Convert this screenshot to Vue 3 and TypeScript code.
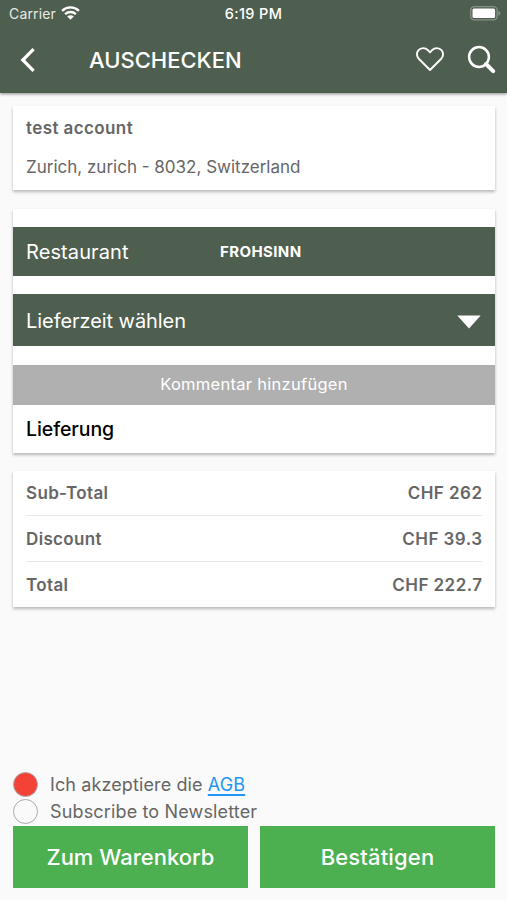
<script setup lang="ts">
import { ref } from 'vue'

interface TotalRow {
  label: string
  amount: string
}

const totals: TotalRow[] = [
  { label: 'Sub-Total', amount: 'CHF 262' },
  { label: 'Discount', amount: 'CHF 39.3' },
  { label: 'Total', amount: 'CHF 222.7' },
]

const termsAccepted = ref(true)
const newsletter = ref(false)
</script>

<template>
  <div class="screen">
    <header class="header">
      <div class="status">
        <div class="carrier">
          <span>Carrier</span>
          <svg class="wifi" width="19" height="14" viewBox="0 0 19 14">
            <path d="M1.1 4.8C5.9.3 13.1.3 17.9 4.8M4.1 8.1c3.1-2.8 7.7-2.8 10.8 0" fill="none" stroke="#fff" stroke-width="2.3" />
            <path d="M6.2 10.4c1.9-1.6 4.7-1.6 6.6 0L9.5 13.7z" fill="#fff" />
          </svg>
        </div>
        <span class="clock">6:19 PM</span>
        <svg class="battery" width="31" height="15" viewBox="0 0 31 15">
          <rect x=".7" y=".7" width="26.4" height="13.2" rx="3.6" fill="none" stroke="#879287" stroke-width="1.3" />
          <rect x="2.5" y="2.5" width="22.6" height="9.6" rx="1.6" fill="#fff" />
          <path d="M28.4 4.8c2.6.8 2.6 4.2 0 5z" fill="#879287" />
        </svg>
      </div>
      <div class="toolbar">
        <svg class="back" width="16" height="26" viewBox="0 0 16 26">
          <path d="M13.6 2.2 2.8 13l10.8 10.8" fill="none" stroke="#fff" stroke-width="3.2" />
        </svg>
        <h1>AUSCHECKEN</h1>
        <svg class="heart" width="30" height="26" viewBox="0 0 30 26">
          <path d="M15 24 4 13C1.6 10.5 1.2 6.7 3.3 4.3 5.9 1.4 10.3 1.4 12.9 4.2L15 6.4l2.1-2.2c2.6-2.8 7-2.8 9.6.1 2.1 2.4 1.7 6.2-.7 8.7z" fill="none" stroke="#fff" stroke-width="1.9" stroke-linejoin="round" />
        </svg>
        <svg class="search" width="30" height="30" viewBox="0 0 30 30">
          <circle cx="12" cy="12" r="9.9" fill="none" stroke="#fff" stroke-width="2.5" />
          <path d="m19 19 7.200 7.200" stroke="#fff" stroke-width="4" stroke-linecap="round" />
        </svg>
      </div>
    </header>

    <main class="content">
      <section class="card address">
        <strong>test account</strong>
        <span>Zurich, zurich - 8032, Switzerland</span>
      </section>

      <section class="card order">
        <div class="band restaurant">
          <span class="band-label">Restaurant</span>
          <span class="restaurant-name">FROHSINN</span>
        </div>
        <div class="band slot">
          <span class="band-label slot-label">Lieferzeit wählen</span>
          <svg class="arrow" width="24" height="14" viewBox="0 0 24 14">
            <path d="M.3.5h23.4L12 13.5z" fill="#fff" />
          </svg>
        </div>
        <div class="comment"><span>Kommentar hinzufügen</span></div>
        <div class="delivery"><span>Lieferung</span></div>
      </section>

      <section class="card totals">
        <div v-for="row in totals" :key="row.label" class="total-row">
          <span>{{ row.label }}</span>
          <span class="amount">{{ row.amount }}</span>
        </div>
      </section>
    </main>

    <footer class="footer">
      <div class="option" @click="termsAccepted = !termsAccepted">
        <i class="radio" :class="{ checked: termsAccepted }"></i>
        <span class="terms">Ich akzeptiere die <a>AGB</a></span>
      </div>
      <div class="option" @click="newsletter = !newsletter">
        <i class="radio" :class="{ checked: newsletter }"></i>
        <span class="news">Subscribe to Newsletter</span>
      </div>
      <div class="buttons">
        <button>Zum Warenkorb</button>
        <button class="confirm">Bestätigen</button>
      </div>
    </footer>
  </div>
</template>

<style>
body {
  margin: 0;
  background: #fafafa;
}
</style>

<style scoped>
.screen {
  display: flex;
  flex-direction: column;
  box-sizing: border-box;
  height: 900px;
  padding-bottom: 12.4px;
  background: #fafafa;
  font-family: Inter, "Liberation Sans", sans-serif;
  color: #666;
  white-space: nowrap;
}
.header {
  height: 93px;
  flex: none;
  background: #4f5f4f;
  color: #fff;
  box-shadow: 0 1px 3px rgba(0, 0, 0, 0.45);
}
.status {
  display: grid;
  grid-template-columns: 1fr auto 1fr;
  align-items: center;
  height: 27px;
  padding: 0 6px 0 9px;
  font-size: 14px;
}
.carrier {
  display: flex;
  align-items: center;
  gap: 5.5px;
  color: #e6eae5;
  letter-spacing: 0.15px;
}
.wifi {
  margin-bottom: 2px;
}
.clock {
  margin-left: -3px;
  font-size: 14.5px;
  font-weight: 500;
  letter-spacing: 0.35px;
}
.battery {
  justify-self: end;
}
.toolbar {
  display: flex;
  align-items: center;
  height: 66px;
  padding: 0 10px 0 20px;
}
h1 {
  flex: 1;
  margin: 0 0 0 53px;
  font-size: 22px;
  font-weight: 500;
}
.heart {
  margin: 0 22px 2px 0;
}
.content {
  display: flex;
  flex-direction: column;
  gap: 18px;
  padding: 13px 12px 0 13px;
}
.card {
  background: #fff;
  box-shadow: 0 2px 3px rgba(0, 0, 0, 0.27);
}
.address {
  display: flex;
  flex-direction: column;
  justify-content: space-between;
  box-sizing: border-box;
  height: 84px;
  padding: 12px 13px;
  font-size: 17px;
  line-height: 21px;
}
strong {
  font-weight: 600;
  letter-spacing: 0.4px;
}
.order {
  height: 226px;
  padding-top: 18px;
  margin-top: 1px;
}
.band {
  display: flex;
  align-items: center;
  background: #4f5f4f;
  color: #fff;
}
.band-label {
  font-size: 20px;
}
.restaurant {
  height: 49px;
  padding-left: 13px;
  margin-bottom: 18px;
}
.restaurant .band-label {
  width: 194px;
  letter-spacing: 0.1px;
}
.restaurant-name {
  font-size: 15px;
  font-weight: 700;
  letter-spacing: 0.4px;
}
.slot {
  justify-content: space-between;
  height: 52px;
  padding: 0 14px 0 13px;
  margin-bottom: 19px;
}
.slot-label {
  letter-spacing: -0.06px;
  padding-top: 2px;
}
.arrow {
  margin-top: 3px;
}
.comment {
  display: flex;
  align-items: center;
  justify-content: center;
  height: 40px;
  background: #b0b0b0;
  color: #fff;
  font-size: 16.5px;
  letter-spacing: 0.28px;
}
.comment span {
  padding-bottom: 2px;
}
.delivery {
  display: flex;
  align-items: center;
  height: 48px;
  padding-left: 13px;
  color: #000;
  font-size: 19.5px;
  font-weight: 500;
  letter-spacing: -0.08px;
}
.totals {
  padding: 0 13px;
  font-size: 17px;
  font-weight: 600;
  letter-spacing: 0.35px;
}
.total-row {
  display: flex;
  align-items: center;
  justify-content: space-between;
  box-sizing: border-box;
  height: 46px;
  border-bottom: 1px solid #e8e8e8;
}
.total-row:first-child {
  height: 45px;
}
.total-row:last-child {
  height: 45px;
  border-bottom: 0;
}
.amount {
  letter-spacing: 0.45px;
  margin-right: -0.45px;
}
.footer {
  margin-top: auto;
  padding: 0 12px 0 13px;
}
.option {
  display: flex;
  align-items: center;
  gap: 12px;
  height: 27px;
  font-size: 18px;
  letter-spacing: 0.15px;
}
.radio {
  box-sizing: border-box;
  width: 25px;
  height: 25px;
  border: 1px solid #aaa;
  border-radius: 50%;
}
.radio.checked {
  background: #f44336;
}
.terms {
  letter-spacing: 0.11px;
}
a {
  color: #2196f3;
  text-decoration: underline;
  text-decoration-thickness: 1.5px;
  text-underline-offset: 2.5px;
}
.buttons {
  display: grid;
  grid-template-columns: 1fr 1fr;
  gap: 12px;
  margin-top: 0.6px;
}
button {
  height: 62px;
  padding: 1px 0 0;
  border: 0;
  background: #4caf50;
  color: #fff;
  font: 500 22px Inter, "Liberation Sans", sans-serif;
}
.confirm {
  letter-spacing: 0.15px;
}
</style>
